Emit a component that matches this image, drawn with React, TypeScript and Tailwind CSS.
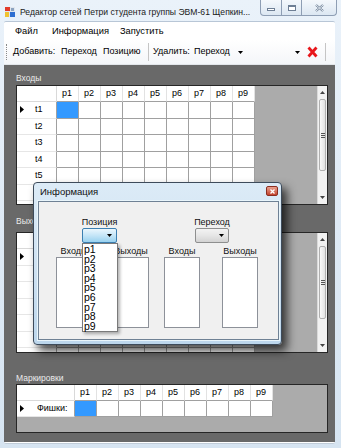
import React from "react";

const cols = ["p1", "p2", "p3", "p4", "p5", "p6", "p7", "p8", "p9"];

function Marker() {
  return (
    <svg width="4" height="7" viewBox="0 0 4 7" className="shrink-0">
      <path d="M0 0 L4 3.5 L0 7Z" fill="#000" />
    </svg>
  );
}

function Caret() {
  return (
    <svg width="5" height="3" viewBox="0 0 5 3" className="shrink-0">
      <path d="M0 0h5L2.5 3z" fill="#000" />
    </svg>
  );
}

function ScrollBar({ thumb }: { thumb: string }) {
  return (
    <div className="w-[10px] flex flex-col bg-[#f2f2f2] border-l border-[#dadada]">
      <div className="h-[13px] flex items-center justify-center">
        <svg width="5" height="3" viewBox="0 0 5 3">
          <path d="M0 3h5L2.5 0z" fill="#444" />
        </svg>
      </div>
      <div
        className={`${thumb} mx-[1px] rounded-[2px] border border-[#b0b0b0] bg-gradient-to-r from-[#fafafa] to-[#e2e2e2] flex flex-col items-center justify-center gap-[1px]`}
      >
        <div className="w-[4px] h-px bg-[#555]" />
        <div className="w-[4px] h-px bg-[#555]" />
        <div className="w-[4px] h-px bg-[#555]" />
      </div>
      <div className="flex-1" />
      <div className="h-[13px] flex items-center justify-center">
        <svg width="5" height="3" viewBox="0 0 5 3">
          <path d="M0 0h5L2.5 3z" fill="#444" />
        </svg>
      </div>
    </div>
  );
}

type GridProps = {
  height: string;
  headW: string;
  rowH: string;
  rows: string[];
  labelGap: string;
  thumb?: string;
};

function Grid({ height, headW, rowH, rows, labelGap, thumb }: GridProps) {
  return (
    <div className={`${height} flex border border-[#262626] bg-[#ababab] overflow-hidden`}>
      <div className="flex-1 overflow-hidden">
        <div className="flex h-[16px]">
          <div className={`${headW} shrink-0 bg-white border-r border-b border-[#d9d9d9]`} />
          {cols.map((c) => (
            <div
              key={c}
              className="w-[22px] shrink-0 bg-white border-r border-b border-r-[#e2e2e2] border-b-[#a0a0a0] pl-[5px] leading-[15px]"
            >
              {c}
            </div>
          ))}
        </div>
        {rows.map((r, i) => (
          <div key={r} className={`flex ${rowH}`}>
            <div
              className={`${headW} shrink-0 bg-white border-r border-b border-r-[#a0a0a0] border-b-[#e6e6e6] flex items-center pl-[3px]`}
            >
              {i === 0 ? <Marker /> : <div className="w-[4px] shrink-0" />}
              <span className={labelGap}>{r}</span>
            </div>
            {cols.map((c, j) => (
              <div
                key={c}
                className={`w-[22px] shrink-0 border-r border-b border-[#a0a0a0] ${
                  i === 0 && j === 0 ? "bg-[#3399ff]" : "bg-white"
                }`}
              />
            ))}
          </div>
        ))}
      </div>
      {thumb && <ScrollBar thumb={thumb} />}
    </div>
  );
}

function ListBox() {
  return <div className="w-full h-[71px] bg-white border border-[#8d9199]" />;
}

function InfoDialog() {
  return (
    <div className="absolute left-[33px] top-[182px] w-[249px] h-[163px] rounded-[4px] border border-[#3d4b5b] bg-gradient-to-b from-[#dcebf7] via-[#cfe2f2] to-[#bcd6ec] shadow-[5px_6px_10px_rgba(0,0,0,0.7)] flex flex-col pl-[4px] pr-[2px] pb-[4px]">
      <div className="h-[18px] flex items-center">
        <span className="ml-[2px] text-[9.5px] text-[#111]">Информация</span>
        <div className="ml-auto mr-[1px] mb-[2px] w-[12px] h-[10px] rounded-[2px] border border-[#8a2d20] bg-gradient-to-b from-[#e9a08f] to-[#c2412c] flex items-center justify-center">
          <svg width="5" height="5" viewBox="0 0 5 5">
            <path d="M0.5 0.5L4.5 4.5M4.5 0.5L0.5 4.5" stroke="#fff" strokeWidth="1.3" />
          </svg>
        </div>
      </div>
      <div className="flex-1 border border-[#6f8194] bg-[#f0f0f0] shadow-[0_0_0_1px_#e9f5fb] flex pl-[17px] gap-[15px] text-[9px] text-[#111]">
        <div className="flex flex-col w-[93px] pt-[14px]">
          <div className="ml-[26px] w-[35px] flex flex-col items-center">
            <span className="h-[12px] leading-[12px]">Позиция</span>
            <div className="w-[35px] h-[15px] rounded-[2px] border border-[#3c7fb1] bg-gradient-to-b from-[#eaf6fd] via-[#c4e5f7] to-[#98d1ef] flex items-center justify-end pr-[4px]">
              <Caret />
            </div>
          </div>
          <div className="flex gap-[21px] mt-[2px]">
            <div className="w-[36px] flex flex-col items-center">
              <span className="h-[12px] leading-[12px]">Входы</span>
              <ListBox />
            </div>
            <div className="w-[36px] flex flex-col items-center">
              <span className="h-[12px] leading-[12px]">Выходы</span>
              <ListBox />
            </div>
          </div>
        </div>
        <div className="flex flex-col w-[94px] pt-[14px]">
          <div className="ml-[31px] w-[34px] flex flex-col items-center">
            <span className="h-[12px] leading-[12px]">Переход</span>
            <div className="w-[34px] h-[15px] rounded-[2px] border border-[#8e8f8f] bg-gradient-to-b from-[#f3f3f3] via-[#e6e6e6] to-[#d3d3d3] flex items-center justify-end pr-[4px]">
              <Caret />
            </div>
          </div>
          <div className="flex gap-[22px] mt-[2px]">
            <div className="w-[36px] flex flex-col items-center">
              <span className="h-[12px] leading-[12px]">Входы</span>
              <ListBox />
            </div>
            <div className="w-[36px] flex flex-col items-center">
              <span className="h-[12px] leading-[12px]">Выходы</span>
              <ListBox />
            </div>
          </div>
        </div>
      </div>
      {/* open dropdown of the first combo */}
      <div className="absolute left-[48px] top-[60px] w-[36px] h-[89px] bg-white border border-[#7a7a7a] shadow-[2px_2px_3px_rgba(0,0,0,0.3)] pt-[1px] pl-[1px] text-[10.5px] text-black">
        {cols.map((c) => (
          <div key={c} className="h-[9.6px] leading-[9.6px]">
            {c}
          </div>
        ))}
      </div>
    </div>
  );
}

export default function App() {
  return (
    <div className="relative w-[341px] h-[448px] overflow-hidden bg-gradient-to-b from-[#eaf2fa] via-[#dfeaf5] to-[#d6e4f1] font-['Liberation_Sans',Arial,sans-serif] text-[9px] text-black">
      {/* title bar */}
      <div className="h-[21px] flex items-start">
        <svg width="10" height="10" viewBox="0 0 10 10" className="ml-[5px] mt-[7px]">
          <rect x="0" y="0" width="10" height="10" fill="#dfe6ee" />
          <rect x="0" y="0" width="5" height="4" fill="#e23b2a" />
          <rect x="5" y="5" width="5" height="5" fill="#2f6fd1" />
          <rect x="0" y="5" width="4" height="5" fill="#f0c231" />
          <rect x="6" y="1" width="3" height="3" fill="#8aa2bf" />
        </svg>
        <span className="ml-[5px] mt-[6px] leading-[12px] text-[8.6px] text-[#1a1a1a] whitespace-nowrap">
          Редактор сетей Петри студента группы ЭВМ-61 Щепкин...
        </span>
        <div className="ml-auto mr-[4px] flex h-[16px] rounded-b-[4px] border border-t-0 border-[#8e9eb4] overflow-hidden bg-gradient-to-b from-[#f4f8fc] to-[#dce7f2]">
          <div className="w-[21px] border-r border-[#8e9eb4] flex items-center justify-center">
            <div className="w-[8px] h-[3px] mt-[3px] border border-[#6e7f95] bg-white" />
          </div>
          <div className="w-[20px] border-r border-[#8e9eb4] flex items-center justify-center">
            <div className="w-[8px] h-[6px] border border-t-2 border-[#6e7f95] bg-white" />
          </div>
          <div className="w-[34px] flex items-center justify-center">
            <svg width="9" height="8" viewBox="0 0 9 8">
              <path d="M1 1L8 7M8 1L1 7" stroke="#6e7f95" strokeWidth="2.2" />
              <path d="M1 1L8 7M8 1L1 7" stroke="#f2f6fa" strokeWidth="0.9" />
            </svg>
          </div>
        </div>
      </div>

      {/* client area */}
      <div className="ml-[4px] mr-[6px] flex flex-col">
        {/* menu */}
        <div className="h-[19px] bg-white rounded-t-[2px] border-t border-[#b8c6d6] flex items-center pl-[11px] pt-[2px] text-[9.3px]">
          <span className="w-[37px]">Файл</span>
          <span className="w-[68px]">Информация</span>
          <span>Запустить</span>
        </div>
        {/* toolbar */}
        <div className="h-[25px] bg-gradient-to-b from-white to-[#f4f6f9] flex items-center border-b border-[#e2e6ea]">
          <div className="w-[9px] flex justify-start pl-[2px]">
            <div className="w-px h-[16px] border-l border-dotted border-[#8a8a8a]" />
          </div>
          <span className="w-[48px]">Добавить:</span>
          <span className="w-[42px]">Переход</span>
          <span className="w-[43px]">Позицию</span>
          <div className="ml-[2px] mr-[4px] w-px h-[18px] bg-[#c5c5c5]" />
          <span className="w-[41px]">Удалить:</span>
          <span className="w-[44px]">Переход</span>
          <Caret />
          <div className="w-[52px]" />
          <Caret />
          <div className="w-[7px]" />
          <svg width="11" height="12" viewBox="0 0 11 12" className="shrink-0">
            <path d="M1.5 1.5L9.5 10.5M9.5 1.5L1.5 10.5" stroke="#e8161b" strokeWidth="2.8" />
          </svg>
          <div className="w-[7px]" />
          <div className="w-px h-[18px] bg-[#c5c5c5]" />
        </div>
        {/* workspace */}
        <div className="h-[377px] bg-[#696969] pl-[12px] pr-[7px] pt-[7px] flex flex-col">
          <div className="h-[13px] leading-[12px] text-[8.5px] text-[#ececec]">Входы</div>
          <Grid
            height="h-[120px]"
            headW="w-[40px]"
            rowH="h-[16.5px]"
            rows={["t1", "t2", "t3", "t4", "t5", "t6", "t7"]}
            labelGap="ml-[11px]"
            thumb="h-[72px]"
          />
          <div className="mt-[10px] h-[17px] leading-[12px] text-[8.5px] text-[#ececec]">Выходы</div>
          <Grid
            height="h-[121px]"
            headW="w-[40px]"
            rowH="h-[16.5px]"
            rows={["t1", "t2", "t3", "t4", "t5", "t6", "t7"]}
            labelGap="ml-[11px]"
            thumb="h-[73px]"
          />
          <div className="mt-[19px] h-[12px] leading-[12px] text-[8.5px] text-[#ececec]">Маркировки</div>
          <Grid
            height="h-[49px]"
            headW="w-[58px]"
            rowH="h-[16px]"
            rows={["Фишки:"]}
            labelGap="ml-[13px]"
          />
        </div>
        <div className="h-[2px] bg-white rounded-b-[3px] border-b border-[#c0ccd8]" />
      </div>

      <InfoDialog />
    </div>
  );
}
